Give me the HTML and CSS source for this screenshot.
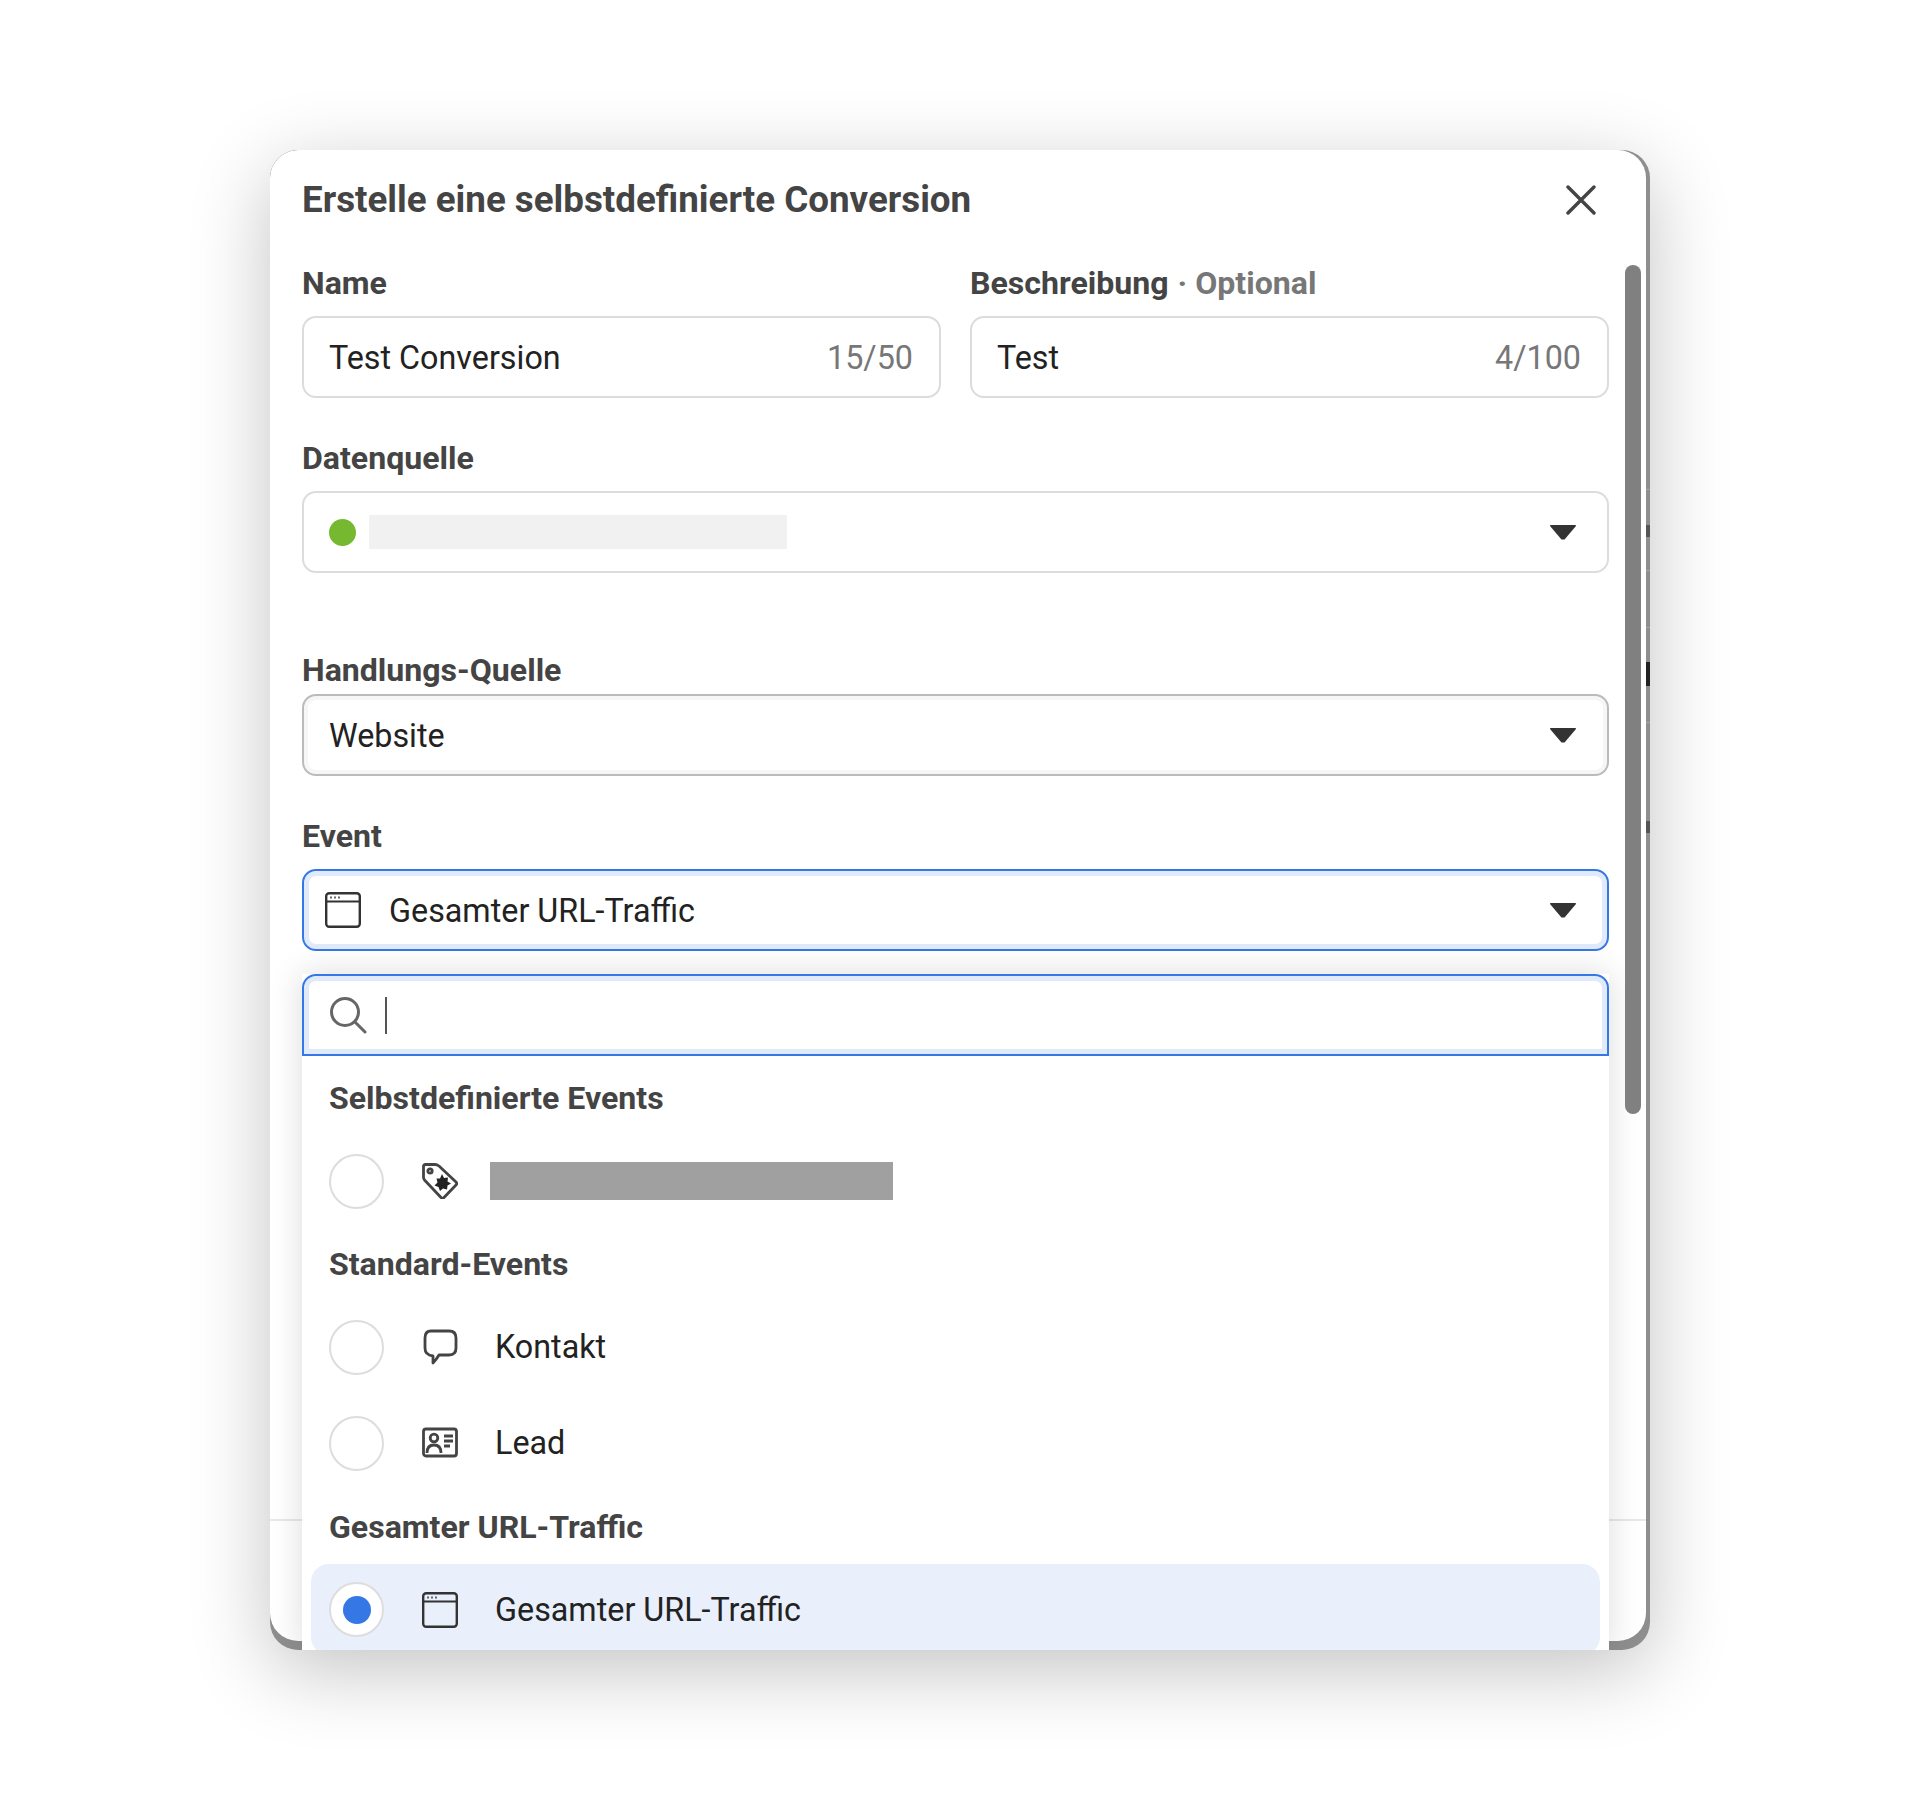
FILE: index.html
```html
<!DOCTYPE html>
<html lang="de">
<head>
    <meta charset="UTF-8">
    <title>Erstelle eine selbstdefinierte Conversion</title>
    <link rel="stylesheet" href="styles.css">
</head>
<body>

<div class="modal">
    <div class="edge-marks"></div>
    <div class="sheet">
        <div class="title-row">
            <h1 class="title">Erstelle eine selbstdefinierte Conversion</h1>
            <svg class="close" viewBox="0 0 30 30"><path d="M2 2 L28 28 M28 2 L2 28"/></svg>
        </div>

        <div class="form">
            <div class="two-cols">
                <div>
                    <div class="label">Name</div>
                    <div class="field">
                        <span class="value">Test Conversion</span>
                        <span class="counter">15/50</span>
                    </div>
                </div>
                <div>
                    <div class="label">Beschreibung <span class="optional">· Optional</span></div>
                    <div class="field">
                        <span class="value">Test</span>
                        <span class="counter">4/100</span>
                    </div>
                </div>
            </div>

            <div class="label label-source">Datenquelle</div>
            <div class="field">
                <span class="source">
                    <span class="green-dot"></span>
                    <span class="redacted-light"></span>
                </span>
                <span class="caret"></span>
            </div>

            <div class="label label-action">Handlungs-Quelle</div>
            <div class="field field-hover">
                <span class="value">Website</span>
                <span class="caret"></span>
            </div>

            <div class="label label-event">Event</div>
            <div class="event-wrap">
                <div class="field field-focus">
                    <span class="event-value">
                        <svg class="icon-browser event-icon" viewBox="0 0 36 36"><use href="#browser"/></svg>
                        <span class="value">Gesamter URL-Traffic</span>
                    </span>
                    <span class="caret"></span>
                </div>

                <div class="menu">
                    <div class="search">
                        <svg class="search-icon" viewBox="0 0 38 38"><circle cx="16" cy="16" r="13.5"/><path d="M26 26 L36 36"/></svg>
                        <span class="cursor"></span>
                    </div>

                    <div class="group">Selbstdefinierte Events</div>
                    <div class="option">
                        <span class="radio"></span>
                        <svg class="icon" viewBox="0 0 36 36">
                            <path class="line" d="M3.5 1.5 H13 Q15 1.5 17 3 L34 19 Q35.5 20.5 34 22 L22 34.5 Q20.5 36 19 34.5 L2.5 17 Q1.5 16 1.5 14 V3.5 Q1.5 1.5 3.5 1.5 Z"/>
                            <circle class="line" cx="8" cy="8" r="2.2"/>
                            <path class="solid" d="M20 11 L22 15 L26 14.5 L25.5 18.5 L29 20.5 L25.5 22.5 L25 26.5 L21 25.5 L18 28 L16.5 24 L12.5 22.5 L15.5 19.5 L14.5 15.5 L18 15.5 Z"/>
                        </svg>
                        <span class="redacted-dark"></span>
                    </div>

                    <div class="group group-next">Standard-Events</div>
                    <div class="option">
                        <span class="radio"></span>
                        <svg class="icon" viewBox="0 0 36 36">
                            <path class="line" d="M9 2 H27 Q34 2 34 9 V19 Q34 26 27 26 H17 Q14 31 11 34 V27 Q3 26 3 19 V9 Q3 2 9 2 Z"/>
                        </svg>
                        <span class="option-text">Kontakt</span>
                    </div>
                    <div class="option option-lead">
                        <span class="radio"></span>
                        <svg class="icon" viewBox="0 0 36 36">
                            <rect class="line" x="1.5" y="4" width="33" height="27" rx="2.5"/>
                            <circle class="line" cx="12" cy="13" r="3.8"/>
                            <path class="line" d="M5 28 Q5 20 12 20 Q19 20 19 28"/>
                            <path class="line" d="M22 11 H31 M22 16 H31 M22 21 H28"/>
                        </svg>
                        <span class="option-text">Lead</span>
                    </div>

                    <div class="group group-last">Gesamter URL-Traffic</div>
                    <div class="option option-selected">
                        <span class="radio radio-on"></span>
                        <svg class="icon-browser" viewBox="0 0 36 36"><use href="#browser"/></svg>
                        <span class="option-text">Gesamter URL-Traffic</span>
                    </div>
                </div>
            </div>
        </div>

        <div class="scroll-thumb"></div>
        <div class="footer"></div>
    </div>
</div>

<svg class="defs" width="0" height="0">
    <symbol id="browser" viewBox="0 0 36 36">
        <rect x="1.2" y="1.2" width="33.6" height="33.6" rx="3" fill="none" stroke="#333" stroke-width="2.4"/>
        <path d="M1.5 9.5 H34.5" stroke="#333" stroke-width="2.2"/>
        <path d="M5 5.5 H7 M9 5.5 H11 M13 5.5 H15" stroke="#666" stroke-width="2"/>
    </symbol>
</svg>

</body>
</html>
```

FILE: styles.css
```css
body {
    margin: 0;
    height: 1800px;
    background-color: #fff;
    font-family: Roboto, "Liberation Sans", sans-serif;
    display: flex;
    justify-content: center;
    align-items: center;
}
.modal {
    width: 1380px;
    height: 1500px;
    position: relative;
    overflow: hidden;
    background-color: #8e8e8e;
    border-radius: 28px;
    box-shadow: 0 20px 80px rgba(0, 0, 0, 0.24);
}
/* bits of the page behind that show through on the right edge */
.edge-marks {
    position: absolute;
    top: 0;
    right: 0;
    width: 4px;
    height: 100%;
    background-image:
        linear-gradient(#a6a6a6, #a6a6a6),
        linear-gradient(#a6a6a6, #a6a6a6),
        linear-gradient(#a6a6a6, #a6a6a6),
        linear-gradient(#a6a6a6, #a6a6a6),
        linear-gradient(#555, #555),
        linear-gradient(#222, #222),
        linear-gradient(#555, #555);
    background-size: 100% 1px, 100% 1px, 100% 1px, 100% 1px, 100% 12px, 100% 24px, 100% 12px;
    background-position: 0 339px, 0 420px, 0 477px, 0 572px, 0 375px, 0 512px, 0 671px;
    background-repeat: no-repeat;
}
.sheet {
    width: 1376px;
    height: 1491px;
    position: relative;
    display: flex;
    flex-direction: column;
    background-color: #fff;
    border-radius: 28px;
}
.title-row {
    height: 98px;
    padding: 0 50px 0 32px;
    display: flex;
    justify-content: space-between;
    align-items: center;
}
.title {
    margin: 0;
    font-size: 36.75px;
    font-weight: 700;
    color: #444;
}
.close {
    width: 30px;
    height: 30px;
    margin-top: 2px;
    fill: none;
    stroke: #444;
    stroke-width: 3.4;
    stroke-linecap: round;
}
.form {
    flex: 1;
    padding: 0 37px 0 32px;
}
.two-cols {
    display: grid;
    grid-template-columns: 639px 639px;
    justify-content: space-between;
}
.label {
    height: 68px;
    box-sizing: border-box;
    padding-top: 2px;
    display: flex;
    align-items: center;
    gap: 9px;
    font-size: 32.1px;
    font-weight: 700;
    color: #444;
}
.optional {
    color: #777;
}
.label-source {
    margin-top: 25px;
}
.label-action {
    margin-top: 73px;
    height: 48px;
    padding-top: 0;
}
.label-event {
    margin-top: 27px;
    height: 66px;
    padding-top: 0;
}
.field {
    height: 82px;
    box-sizing: border-box;
    padding: 0 26px 0 25px;
    display: flex;
    justify-content: space-between;
    align-items: center;
    border: 2px solid #dcdcdc;
    border-radius: 14px;
    background-color: #fff;
}
.field-hover {
    border-color: #bbb;
    box-shadow: inset 0 0 0 4px #f6f6f6;
}
.field-focus {
    padding-left: 21px;
    border-color: #3578e5;
    box-shadow: inset 0 0 0 5px #e1eafb;
}
.value, .counter {
    padding-top: 2px;
    font-size: 32.3px;
}
.value {
    color: #222;
}
.counter {
    color: #777;
}
.source {
    display: flex;
    align-items: center;
    gap: 13px;
}
.green-dot {
    width: 27px;
    height: 27px;
    border-radius: 50%;
    background-color: #76b82f;
}
.redacted-light {
    width: 418px;
    height: 34px;
    background-color: #f1f1f1;
}
.caret {
    width: 26px;
    height: 15px;
    margin-right: 5px;
    background-color: #333;
    clip-path: polygon(2% 0, 98% 0, 100% 10%, 56% 100%, 44% 100%, 0 10%);
}
.event-value {
    display: flex;
    align-items: center;
    gap: 28px;
}
.event-wrap {
    position: relative;
}
.menu {
    position: absolute;
    top: 105px;
    left: 0;
    right: 0;
    height: 677px;
    background-color: #fff;
    box-shadow: 0 0 32px rgba(0, 0, 0, 0.14);
}
.search {
    height: 82px;
    box-sizing: border-box;
    padding-left: 25px;
    display: flex;
    align-items: center;
    gap: 18px;
    border: 2px solid #3578e5;
    border-radius: 14px 14px 0 0;
    box-shadow: inset 0 0 0 5px #e1eafb;
    background-color: #fff;
}
.search-icon {
    width: 38px;
    height: 38px;
    fill: none;
    stroke: #666;
    stroke-width: 3;
    stroke-linecap: round;
}
.cursor {
    width: 2px;
    height: 37px;
    background-color: #555;
}
.group {
    height: 84px;
    padding-left: 27px;
    display: flex;
    align-items: center;
    font-size: 32.1px;
    font-weight: 700;
    color: #444;
}
.group-last {
    height: 75px;
    margin-top: 5px;
}
.option {
    height: 82px;
    padding-left: 27px;
    display: flex;
    align-items: center;
}
.option-lead {
    margin-top: 14px;
}
.option-selected {
    height: 91px;
    margin: 0 9px;
    padding-left: 18px;
    background-color: #e9effb;
    border-radius: 18px;
}
.radio {
    width: 55px;
    height: 55px;
    box-sizing: border-box;
    flex: none;
    margin-right: 38px;
    border: 2px solid #ddd;
    border-radius: 50%;
    background-color: #fff;
}
.radio-on {
    display: flex;
    align-items: center;
    justify-content: center;
}
.radio-on::after {
    content: "";
    width: 28px;
    height: 28px;
    border-radius: 50%;
    background-color: #3578e5;
}
.icon, .icon-browser {
    width: 36px;
    height: 36px;
    flex: none;
}
.icon .line {
    fill: none;
    stroke: #444;
    stroke-width: 2.8;
    stroke-linejoin: round;
}
.icon .solid {
    fill: #222;
}
.option-text {
    margin-left: 37px;
    font-size: 32.3px;
    color: #222;
}
.redacted-dark {
    width: 403px;
    height: 38px;
    margin-left: 32px;
    background-color: #a0a0a0;
}
.scroll-thumb {
    position: absolute;
    top: 115px;
    right: 5px;
    width: 16px;
    height: 849px;
    background-color: #808080;
    border-radius: 8px;
}
.footer {
    height: 120px;
    border-top: 2px solid #e8e8e8;
}
.defs {
    position: absolute;
}
```
